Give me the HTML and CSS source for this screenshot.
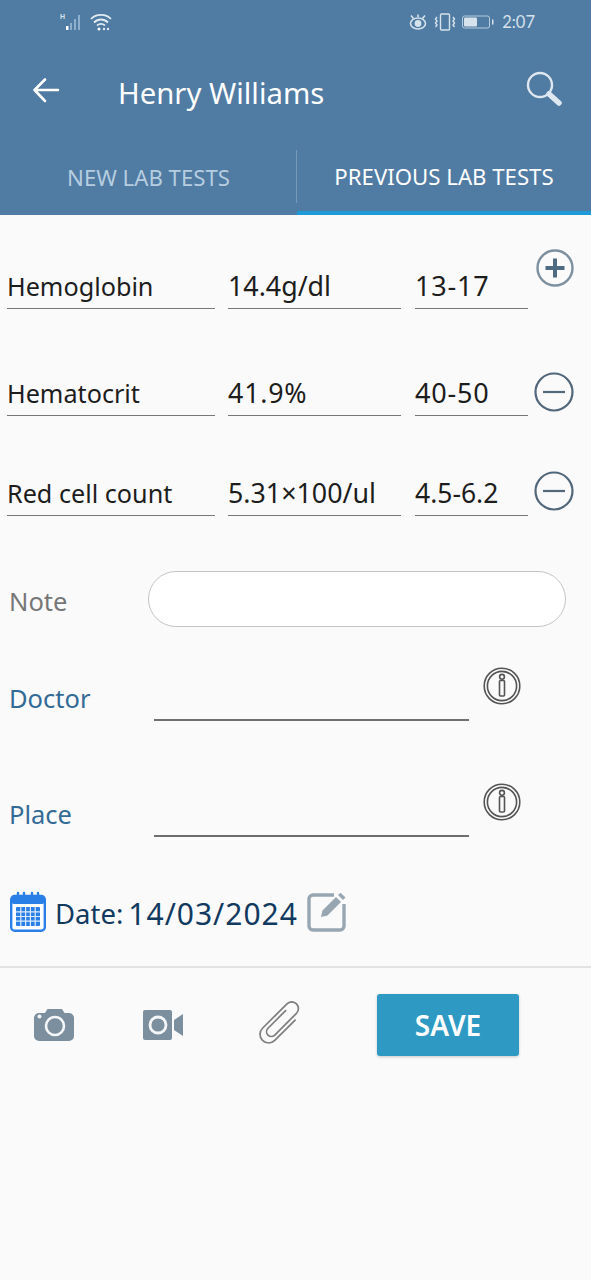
FILE: index.html
```html
<!DOCTYPE html>
<html lang="en">
<head>
<meta charset="utf-8">
<title>Henry Williams</title>
<link rel="stylesheet" href="styles.css">
</head>
<body>
<header class="appbar">
  <div class="status">
    <div class="status-left">
      <svg class="sig" viewBox="0 0 26 20" width="26" height="20">
        <text x="0" y="7" class="h-mark">H</text>
        <rect x="6" y="14" width="2.500" height="4" fill="#fff"/>
        <rect x="10" y="11" width="2" height="7" fill="#8fb0cc"/>
        <rect x="14" y="7" width="2" height="11" fill="#8fb0cc"/>
        <rect x="18" y="3" width="2" height="15" fill="#8fb0cc"/>
      </svg>
      <svg class="wifi" viewBox="0 0 24 20" width="24" height="20" fill="none" stroke="#e2ebf2" stroke-width="1.800">
        <path d="M2 7C7 1.500 17 1.500 22 7"/>
        <path d="M5 10.500C9 6.500 15 6.500 19 10.500"/>
        <path d="M8 13.500C10.500 11.500 13.500 11.500 16 13.500"/>
        <circle cx="10" cy="17" r="1.500" fill="#fff" stroke="none"/>
        <circle cx="15" cy="17" r="1.200" fill="#e2ebf2" stroke="none"/>
        <circle cx="19" cy="17" r="1.200" fill="#e2ebf2" stroke="none"/>
      </svg>
    </div>
    <div class="status-right">
      <svg viewBox="0 0 20 18" width="20" height="18" fill="none" stroke="#d6e2ec" stroke-width="1.600">
        <ellipse cx="10" cy="10.500" rx="7.500" ry="5.500"/>
        <circle cx="10" cy="10.500" r="2.600" fill="#d6e2ec"/>
        <path d="M3 2.500L5.500 5.500M17 2.500L14.500 5.500M10 1.500V4"/>
      </svg>
      <svg viewBox="0 0 22 18" width="22" height="18" fill="none" stroke="#d6e2ec" stroke-width="1.400">
        <rect x="6.500" y="1" width="9" height="16" rx="1"/>
        <path d="M3 4L1.500 6L3 8L1.500 10L3 12L1.500 14M19 4L20.500 6L19 8L20.500 10L19 12L20.500 14"/>
      </svg>
      <svg viewBox="0 0 34 14" width="34" height="14">
        <rect x="0.500" y="1" width="27" height="12" rx="2" fill="none" stroke="#b9cddd"/>
        <rect x="2" y="2.500" width="13" height="9" rx="1" fill="#d6e2ec"/>
        <rect x="30" y="4.500" width="1.500" height="5" fill="#d6e2ec"/>
      </svg>
      <span class="clock">2:07</span>
    </div>
  </div>
  <div class="titlebar">
    <svg class="back" viewBox="0 0 28 26" width="28" height="26" fill="none" stroke="#fff" stroke-width="2.600" stroke-linecap="round" stroke-linejoin="round">
      <path d="M26 13H3M13 2.500L2.500 13L13 24"/>
    </svg>
    <h1 class="title">Henry Williams</h1>
    <svg class="search" viewBox="0 0 38 38" width="38" height="38" fill="none">
      <circle cx="15" cy="15" r="12" stroke="#dfe8f0" stroke-width="2.400"/>
      <path d="M24 24L34 33" stroke="#dfe8f0" stroke-width="5.500" stroke-linecap="round"/>
    </svg>
  </div>
  <nav class="tabs">
    <div class="tab">NEW LAB TESTS</div>
    <div class="tab tab-active">PREVIOUS LAB TESTS</div>
  </nav>
</header>

<main>
  <section class="lab lab-1">
    <div class="cell c1">Hemoglobin</div>
    <div class="cell c2">14.4g/dl</div>
    <div class="cell c3">13-17</div>
    <svg class="round plus" viewBox="0 0 38 38" width="38" height="38" fill="none">
      <circle cx="19" cy="19" r="17.500" stroke="#7d909f" stroke-width="2.400"/>
      <path d="M19 9.500V28.500M9.500 19H28.500" stroke="#4f6b82" stroke-width="4"/>
    </svg>
  </section>
  <section class="lab lab-2">
    <div class="cell c1">Hematocrit</div>
    <div class="cell c2 wide">41.9%</div>
    <div class="cell c3">40-50</div>
    <svg class="round minus" viewBox="0 0 40 40" width="40" height="40" fill="none">
      <circle cx="20" cy="20" r="18.500" stroke="#52677a" stroke-width="2.200"/>
      <path d="M9 20H31" stroke="#52677a" stroke-width="2.200"/>
    </svg>
  </section>
  <section class="lab lab-3">
    <div class="cell c1">Red cell count</div>
    <div class="cell c2">5.31×100/ul</div>
    <div class="cell c3 tight">4.5-6.2</div>
    <svg class="round minus" viewBox="0 0 40 40" width="40" height="40" fill="none">
      <circle cx="20" cy="20" r="18.500" stroke="#52677a" stroke-width="2.200"/>
      <path d="M9 20H31" stroke="#52677a" stroke-width="2.200"/>
    </svg>
  </section>

  <section class="note">
    <span class="note-label">Note</span>
    <div class="note-input"></div>
  </section>

  <section class="field field-doctor">
    <span class="field-label">Doctor</span>
    <div class="field-line"></div>
    <svg class="info" viewBox="0 0 38 38" width="38" height="38" fill="none" stroke="#555" stroke-width="1.600">
      <circle cx="19" cy="19" r="17.800"/>
      <circle cx="19" cy="19" r="14.600"/>
      <circle cx="19" cy="9.800" r="2.400"/>
      <rect x="16.500" y="13.500" width="5" height="15.500" rx="1"/>
    </svg>
  </section>
  <section class="field field-place">
    <span class="field-label">Place</span>
    <div class="field-line"></div>
    <svg class="info" viewBox="0 0 38 38" width="38" height="38" fill="none" stroke="#555" stroke-width="1.600">
      <circle cx="19" cy="19" r="17.800"/>
      <circle cx="19" cy="19" r="14.600"/>
      <circle cx="19" cy="9.800" r="2.400"/>
      <rect x="16.500" y="13.500" width="5" height="15.500" rx="1"/>
    </svg>
  </section>

  <section class="date">
    <svg class="cal" viewBox="0 0 36 41" width="36" height="41">
      <rect x="1.200" y="5" width="33.600" height="34.800" rx="3.500" fill="#fff" stroke="#2a7fe6" stroke-width="2.400"/>
      <rect x="1.200" y="5" width="33.600" height="8" rx="3" fill="#2a7fe6"/>
      <g stroke="#2a7fe6" stroke-width="2.400" stroke-linecap="round" fill="none">
        <path d="M8 2V8M14 2V8M22 2V8M28 2V8"/>
      </g>
      <rect x="6" y="16" width="24" height="19" rx="1" fill="#2a7fe6"/>
      <g stroke="#dcebfb" stroke-width="1.200">
        <path d="M6 20.800H30M6 25.500H30M6 30.200H30M10.800 16V35M15.600 16V35M20.400 16V35M25.200 16V35"/>
      </g>
    </svg>
    <span class="date-label">Date:</span>
    <span class="date-value">14/03/2024</span>
    <svg class="edit" viewBox="0 0 40 40" width="40" height="40" fill="none">
      <path d="M27 3H6A4 4 0 0 0 2 7V34A4 4 0 0 0 6 38H33A4 4 0 0 0 37 34V12" stroke="#98a6b1" stroke-width="3.400"/>
      <path d="M14 25L15.500 18.500L29 5L34 10L20.500 23.500Z" fill="#98a6b1"/>
      <path d="M31 3L33.500 .8L38.500 5.500L36 8Z" fill="#98a6b1"/>
    </svg>
  </section>

  <div class="divider"></div>

  <section class="toolbar">
    <svg class="cam" viewBox="0 0 40 33" width="40" height="33">
      <path d="M5 5H11L13.500 1H28L30.500 5H35A5 5 0 0 1 40 10V28A5 5 0 0 1 35 33H5A5 5 0 0 1 0 28V10A5 5 0 0 1 5 5Z" fill="#7c8f9e"/>
      <circle cx="21" cy="18" r="9" fill="none" stroke="#f4f6f8" stroke-width="2.600"/>
      <circle cx="5.500" cy="8.500" r="2" fill="#f4f6f8"/>
    </svg>
    <svg class="vid" viewBox="0 0 40 30" width="40" height="30">
      <rect x="0" y="0" width="29" height="30" rx="2" fill="#7c8f9e"/>
      <circle cx="15" cy="15" r="8" fill="#7c8f9e" stroke="#f4f6f8" stroke-width="2.800"/>
      <path d="M31 10L40 4V26L31 20Z" fill="#7c8f9e"/>
    </svg>
    <svg class="clip" viewBox="0 0 44 44" width="44" height="44" fill="none">
      <g transform="translate(21.500 22.500) rotate(45) scale(.96) translate(-9 -28)" stroke="#7f7f7f" stroke-width="1.800" stroke-linecap="round">
        <path d="M18 14V44A9 9 0 0 1 0 44V8A7 7 0 0 1 14 8V40A5 5 0 0 1 4 40V14"/>
      </g>
    </svg>
    <button class="save" type="button">SAVE</button>
  </section>
</main>
</body>
</html>
```
FILE: styles.css
```css
* { box-sizing: border-box; }
html, body { margin: 0; padding: 0; }
body {
  width: 591px;
  height: 1280px;
  background: #fafafa;
  font-family: "Noto Sans", "Open Sans", sans-serif;
  overflow: hidden;
}
.appbar {
  height: 215px;
  background: #507ba3;
  color: #fff;
  display: flex;
  flex-direction: column;
}
.status {
  height: 44px;
  display: flex;
  justify-content: space-between;
  align-items: center;
  padding: 0 56px 0 60px;
}
.status-left, .status-right { display: flex; align-items: center; }
.status-left { gap: 3px; }
.status-right { gap: 6px; }
.h-mark { font: 700 7px "Liberation Sans", sans-serif; fill: #d6e2ec; }
.clock { font: 400 16.500px Lato, sans-serif; color: #d6e2ec; }
.titlebar {
  height: 96px;
  display: flex;
  align-items: center;
  padding: 0 28px 0 32px;
}
.back { flex: none; margin-top: -4px; }
.title {
  margin: 2px 0 0 58px;
  flex: 1;
  font-size: 29.300px;
  font-weight: 400;
  line-height: 36px;
}
.search { flex: none; margin-top: -6px; }
.tabs {
  flex: 1;
  display: flex;
}
.tab {
  flex: 0 0 297px;
  height: 75px;
  display: flex;
  align-items: center;
  justify-content: center;
  font-size: 22.200px;
  color: #b6cde0;
  padding-bottom: 1px;
  position: relative;
}
.tab-active {
  flex: 0 0 294px;
  color: #fff;
  border-bottom: 4px solid #1e9ad6;
  padding: 2px 0 0;
}
.tab-active::before {
  content: "";
  position: absolute;
  left: -1px;
  top: 10px;
  bottom: 8px;
  width: 1px;
  background: #7798b6;
}
.lab { display: flex; align-items: flex-start; padding-left: 7px; }
.lab-1 { height: 60px; margin-top: 34px; }
.lab-2 { height: 44px; margin-top: 63px; }
.lab-3 { height: 45px; margin-top: 55px; }
.cell {
  align-self: flex-end;
  height: 40px;
  line-height: 34px;
  font-size: 25.200px;
  color: #1d1d1d;
  border-bottom: 1.500px solid #777;
  white-space: nowrap;
}
.c1 { width: 208px; margin-right: 13px; }
.c2 { width: 173px; margin-right: 14px; font-size: 26.800px; }
.c3 { width: 113px; font-size: 27px; letter-spacing: 0.800px; }
.wide { letter-spacing: 0.800px; }
.tight { letter-spacing: 0; font-size: 26.500px; }
.round { flex: none; }
.plus { margin-left: 8px; }
.minus { margin-left: 6px; }
.note {
  display: flex;
  align-items: center;
  height: 56px;
  margin-top: 55px;
  padding-left: 9px;
}
.note-label { width: 139px; font-size: 25.500px; color: #777; padding-top: 3px; }
.note-input {
  width: 418px;
  height: 56px;
  background: #fff;
  border: 1.500px solid #c4c4c4;
  border-radius: 28px;
}
.field {
  display: flex;
  align-items: flex-start;
  height: 54px;
  padding-left: 9px;
}
.field-doctor { margin-top: 40px; }
.field-place { margin-top: 62px; }
.field-label {
  align-self: flex-end;
  width: 145px;
  font-size: 25.500px;
  line-height: 34px;
  color: #336a96;
  margin-bottom: 6px;
}
.field-line {
  align-self: flex-end;
  width: 315px;
  height: 2px;
  background: #6f6f6f;
}
.info { flex: none; margin-left: 14px; }
.date {
  display: flex;
  align-items: center;
  height: 41px;
  margin-top: 54px;
  padding-left: 10px;
}
.cal { flex: none; }
.date-label { margin-left: 9px; font-size: 27.500px; color: #123a60; padding-top: 4px; }
.date-value { margin-left: 5px; font-size: 30px; color: #123a60; letter-spacing: 1px; padding-top: 3px; }
.edit { flex: none; margin-left: 9px; }
.divider { height: 1.500px; background: #e2e2e2; margin-top: 34px; }
.toolbar {
  display: flex;
  align-items: center;
  height: 62px;
  margin-top: 26px;
  padding-left: 34px;
}
.vid { margin-left: 69px; }
.clip { margin-left: 75px; margin-top: -4px; }
.save {
  margin-left: 75px;
  width: 142px;
  height: 62px;
  border: none;
  border-radius: 3px;
  background: #2e9ac4;
  color: #fff;
  font: 600 28px "Noto Sans", sans-serif;
  box-shadow: 0 1px 3px rgba(0,0,0,.2);
}
```
